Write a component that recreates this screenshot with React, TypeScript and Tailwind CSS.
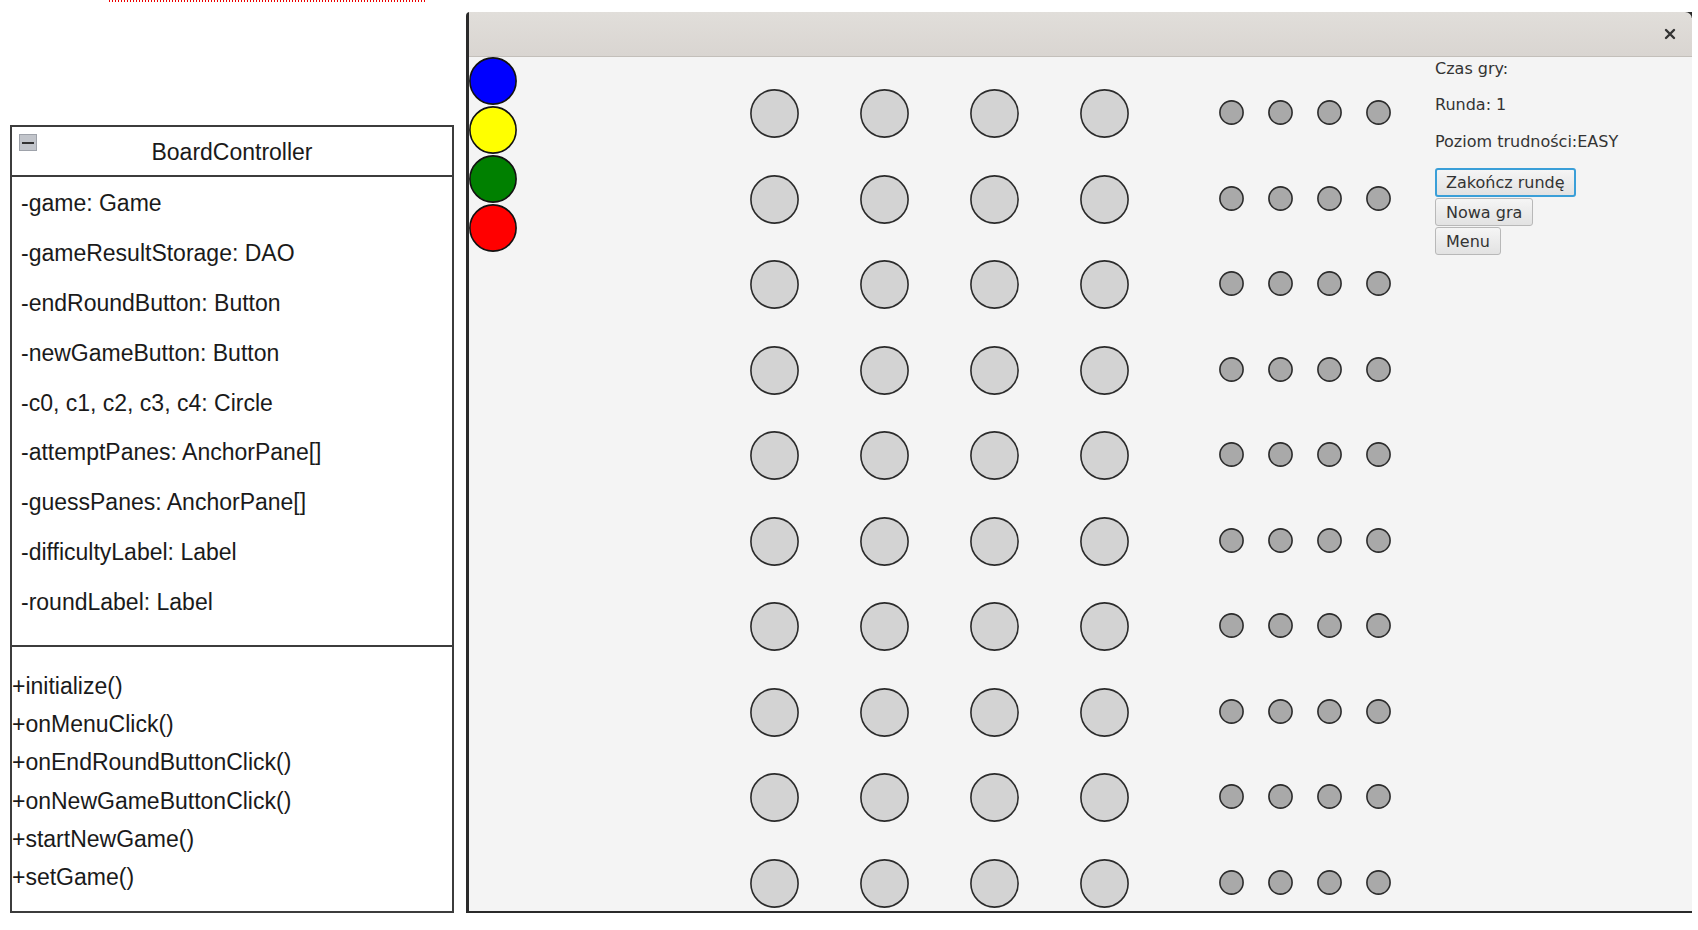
import React from 'react';

const attributes = [
  '-game: Game',
  '-gameResultStorage: DAO',
  '-endRoundButton: Button',
  '-newGameButton: Button',
  '-c0, c1, c2, c3, c4: Circle',
  '-attemptPanes: AnchorPane[]',
  '-guessPanes: AnchorPane[]',
  '-difficultyLabel: Label',
  '-roundLabel: Label',
];

const methods = [
  '+initialize()',
  '+onMenuClick()',
  '+onEndRoundButtonClick()',
  '+onNewGameButtonClick()',
  '+startNewGame()',
  '+setGame()',
];

const palette = ['#0000ff', '#ffff00', '#008000', '#ff0000'];

const ROWS = 10;
const COLS = 4;
const cells = Array.from({ length: ROWS * COLS }, (_, i) => i);

function Dot({ size, fill, stroke = '#2b2b2b' }: { size: number; fill: string; stroke?: string }) {
  return (
    <svg width={size} height={size} viewBox={`0 0 ${size} ${size}`} className="block">
      <circle cx={size / 2} cy={size / 2} r={size / 2 - 0.9} fill={fill} stroke={stroke} strokeWidth="1.6" />
    </svg>
  );
}

function UmlClass() {
  return (
    <div
      className="mt-[123px] w-[444px] h-[788px] flex flex-col border-2 border-[#3c3c3c] bg-white text-[#1a1a1a]"
      style={{ fontFamily: '"Liberation Sans", Arial, sans-serif' }}
    >
      {/* Header */}
      <div className="relative h-[50px] shrink-0 border-b-2 border-[#3c3c3c] flex items-center justify-center pt-[3px] text-[23px] leading-[45px]">
        <div className="absolute left-[7px] top-[7px] w-[18px] h-[17px] bg-[#c2c5cb] border border-[#9ea2aa] flex items-center justify-center">
          <div className="w-[12px] h-[2px] bg-[#333]" />
        </div>
        BoardController
      </div>

      {/* Attributes */}
      <div className="h-[470px] shrink-0 border-b-2 border-[#3c3c3c] pt-[2px] pl-[9px] flex flex-col">
        {attributes.map((a) => (
          <div key={a} className="h-[49.9px] leading-[49.9px] text-[23px] whitespace-nowrap">
            {a}
          </div>
        ))}
      </div>

      {/* Methods */}
      <div className="flex-1 pt-[20px] flex flex-col">
        {methods.map((m) => (
          <div key={m} className="h-[38.2px] leading-[38.2px] text-[23px] whitespace-nowrap">
            {m}
          </div>
        ))}
      </div>
    </div>
  );
}

function GameWindow() {
  const ui = { fontFamily: '"DejaVu Sans", Verdana, sans-serif' };
  const btn = 'h-[28px] px-[10px] rounded-[3px] border border-[#b8b8b8] bg-linear-to-b from-[#f5f5f5] to-[#e2e2e2] text-[16px] leading-[19px] text-[#333]';
  return (
    <div className="relative mt-[12px] w-[1226px] h-[901px] shrink-0 flex flex-col border-l-[3px] border-b-2 border-[#2a2a2a] rounded-tl-[4px]">
      <div className="absolute top-0 right-0 w-[7px] h-[6px] bg-[#2a2a2a]" />
      {/* Title bar */}
      <div className="relative h-[45px] shrink-0 flex items-center justify-end pr-[16px] bg-linear-to-b from-[#e1deda] to-[#d9d5d1] border-b border-[#c3bfba] rounded-tr-[7px]">
        <svg width="12" height="12" viewBox="0 0 12 12">
          <path d="M2 2 L10 10 M10 2 L2 10" stroke="#333" strokeWidth="2.4" strokeLinecap="round" />
        </svg>
      </div>

      {/* Board */}
      <div className="flex-1 flex items-start bg-[#f4f4f4]" style={ui}>
        {/* Colour picker */}
        <div className="flex flex-col gap-[1px]">
          {palette.map((c) => (
            <Dot key={c} size={48} fill={c} stroke="#111" />
          ))}
        </div>

        {/* Attempts */}
        <div className="ml-[233px] mt-[32px] grid grid-cols-4 gap-x-[61px] gap-y-[36.5px]">
          {cells.map((i) => (
            <Dot key={i} size={49} fill="#d3d3d3" />
          ))}
        </div>

        {/* Hints */}
        <div className="ml-[90px] mt-[43px] grid grid-cols-4 gap-x-[24px] gap-y-[60.5px]">
          {cells.map((i) => (
            <Dot key={i} size={25} fill="#a9a9a9" />
          ))}
        </div>

        {/* Side panel */}
        <div className="ml-[44px] pt-[2px] flex flex-col items-start text-[16px] text-[#333]">
          <div className="h-[19px] leading-[19px]">Czas gry:</div>
          <div className="mt-[17px] h-[19px] leading-[19px]">Runda: 1</div>
          <div className="mt-[18px] h-[19px] leading-[19px] whitespace-nowrap">Poziom trudności:EASY</div>
          <button className="mt-[17px] h-[29px] px-[9px] rounded-[3px] border-2 border-[#3a9fd8] bg-linear-to-b from-[#f5f5f5] to-[#e2e2e2] text-[16px] leading-[19px] text-[#333]">
            Zakończ rundę
          </button>
          <button className={`mt-[1px] ${btn}`}>Nowa gra</button>
          <button className={`mt-[1px] ${btn}`}>Menu</button>
        </div>
      </div>
    </div>
  );
}

export default function App() {
  return (
    <div className="w-[1698px] h-[930px] flex bg-white overflow-hidden">
      <div className="w-[466px] shrink-0 pl-[10px] flex flex-col">
        <div className="ml-[99px] w-[316px] h-[2px] bg-[repeating-linear-gradient(90deg,#ee0000_0_1px,transparent_1px_3px)]" />
        <UmlClass />
      </div>
      <GameWindow />
    </div>
  );
}
